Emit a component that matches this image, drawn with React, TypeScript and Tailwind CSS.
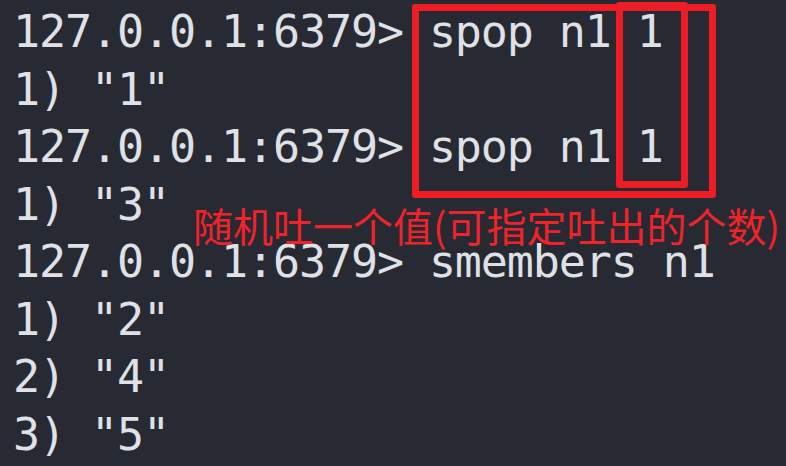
import React from 'react';

const lines = [
  '127.0.0.1:6379> spop n1 1',
  '1) "1"',
  '127.0.0.1:6379> spop n1 1',
  '1) "3"',
  '127.0.0.1:6379> smembers n1',
  '1) "2"',
  '2) "4"',
  '3) "5"',
];

const App: React.FC = () => {
  return (
    <div className="relative w-[786px] h-[466px] overflow-hidden bg-[#282a33]">
      <div className="flex flex-col pl-[13px] pt-[3px] font-['DejaVu_Sans_Mono',monospace] text-[45px] leading-[57.5px] tracking-[-1.1px] text-[#dfe1e6] whitespace-pre">
        {lines.map((line, i) => (
          <div key={i}>{line}</div>
        ))}
      </div>

      {/* annotation boxes drawn over the output */}
      <div className="absolute left-[412px] top-[4px] w-[304px] h-[194px] border-[7px] border-[#ee1d25] rounded-[3px]" />
      <div className="absolute left-[616px] top-[2px] w-[72px] h-[186px] border-[7px] border-[#ee1d25] rounded-[3px]" />
      <div className="absolute left-[193px] top-[199px] font-['Noto_Sans_CJK_SC','Noto_Sans',sans-serif] text-[40px] leading-[52px] text-[#f0222a] whitespace-nowrap">
        随机吐一个值(可指定吐出的个数)
      </div>
    </div>
  );
};

export default App;
